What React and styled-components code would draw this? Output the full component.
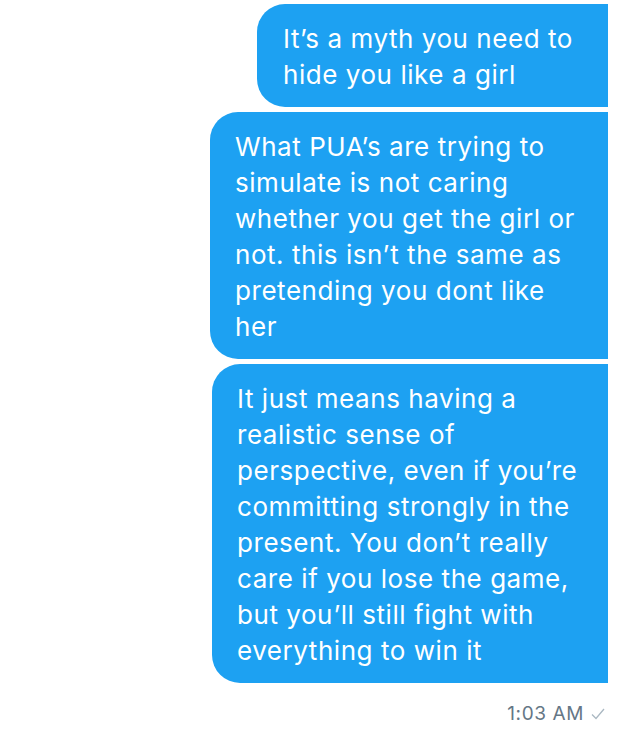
import React from "react";
import styled, { createGlobalStyle } from "styled-components";

const Global = createGlobalStyle`
  html, body { margin: 0; padding: 0; background: #ffffff; }
  body { font-family: Inter, "Noto Sans", sans-serif; -webkit-font-smoothing: antialiased; }
`;

const Thread = styled.div`
  width: 640px;
  height: 730px;
  overflow: hidden;
  box-sizing: border-box;
  padding: 4px 32px 0 0;
  display: flex;
  flex-direction: column;
  align-items: flex-end;
  gap: 5px;
`;

const Bubble = styled.div`
  box-sizing: border-box;
  width: ${(p) => p.$w}px;
  background: #1da1f2;
  color: #ffffff;
  font-size: 26px;
  line-height: 36px;
  letter-spacing: 0.55px;
  padding: 17px 0 14px ${(p) => p.$pl}px;
  border-radius: 28px 0 0 28px;
  white-space: nowrap;
`;

const Line = styled.div``;

const Meta = styled.div`
  display: flex;
  align-items: center;
  gap: 7px;
  margin-top: 15px;
  padding-right: 3px;
  font-size: 19px;
  line-height: 22px;
  letter-spacing: 0.6px;
  color: #657786;
`;

const Check = styled.svg`
  width: 14px;
  height: 12px;
  display: block;
`;

const messages = [
  { w: 351, pl: 26, lines: ["It\u2019s a myth you need to", "hide you like a girl"] },
  {
    w: 398,
    pl: 25,
    lines: [
      "What PUA\u2019s are trying to",
      "simulate is not caring",
      "whether you get the girl or",
      "not. this isn\u2019t the same as",
      "pretending you dont like",
      "her",
    ],
  },
  {
    w: 396,
    pl: 25,
    lines: [
      "It just means having a",
      "realistic sense of",
      "perspective, even if you\u2019re",
      "committing strongly in the",
      "present. You don\u2019t really",
      "care if you lose the game,",
      "but you\u2019ll still fight with",
      "everything to win it",
    ],
  },
];

export default function App() {
  return (
    <>
      <Global />
      <Thread>
        {messages.map((m, i) => (
          <Bubble key={i} $w={m.w} $pl={m.pl}>
            {m.lines.map((l, j) => (
              <Line key={j}>{l}</Line>
            ))}
          </Bubble>
        ))}
        <Meta>
          <span>1:03 AM</span>
          <Check viewBox="0 0 14 12">
            <path d="M1 6.5 L5 10.5 L13 1" fill="none" stroke="#aab8c2" strokeWidth="1.3" />
          </Check>
        </Meta>
      </Thread>
    </>
  );
}
